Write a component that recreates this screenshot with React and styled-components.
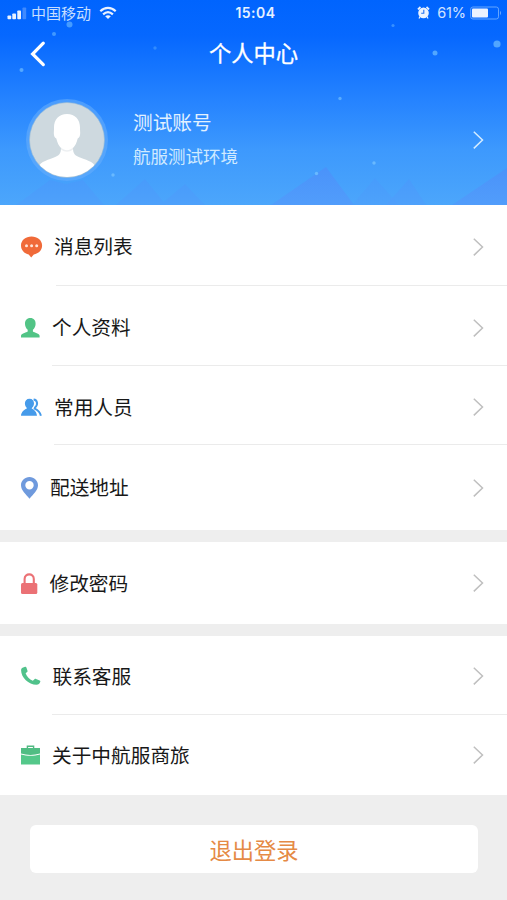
import React from "react";
import styled, { createGlobalStyle } from "styled-components";

const GlobalStyle = createGlobalStyle`
  * { box-sizing: border-box; }
  body {
    margin: 0;
    background: #eeeeee;
    font-family: "Liberation Sans", "Noto Sans CJK SC", sans-serif;
    -webkit-font-smoothing: antialiased;
  }
`;

const Page = styled.div`
  width: 507px;
  height: 900px;
  display: flex;
  flex-direction: column;
  overflow: hidden;
  background: #eeeeee;
`;

const Hero = styled.header`
  position: relative;
  height: 205px;
  flex: none;
  color: #fff;
  background: linear-gradient(180deg, #0064fe 0, #0668ff 36px, #2583ff 100px, #3d99fd 150px, #4ca6fb 205px);
`;

const Scenery = styled.svg`
  position: absolute;
  inset: 0;
`;

const HeroContent = styled.div`
  position: relative;
  display: flex;
  flex-direction: column;
`;

const StatusBar = styled.div`
  display: grid;
  grid-template-columns: 1fr auto 1fr;
  align-items: center;
  height: 26px;
  padding: 0 5px 0 7px;
`;

const StatusGroup = styled.div`
  display: flex;
  align-items: center;
  justify-content: ${(p) => (p.$end ? "flex-end" : "flex-start")};
  opacity: 0.92;
  svg { flex: none; }
`;

const Carrier = styled.span`
  margin: 0 8px 0 4px;
  padding-top: 1px;
  font-size: 15px;
  line-height: 20px;
  color: #d9e9ff;
`;

const Clock = styled.time`
  padding-left: 2px;
  font: 600 14px/20px Inter, "Noto Sans CJK SC", sans-serif;
  letter-spacing: 0.5px;
  color: #e6f1ff;
`;

const Percent = styled.span`
  margin: 0 4px 0 7px;
  font: 400 14.5px/20px Inter, sans-serif;
  letter-spacing: -0.1px;
  color: #e2eeff;
`;

const NavBar = styled.div`
  display: grid;
  grid-template-columns: 60px 1fr 60px;
  align-items: center;
  height: 56px;
`;

const BackButton = styled.button`
  display: flex;
  padding: 0 0 0 29px;
  border: 0;
  background: none;
  color: #fff;
`;

const Title = styled.h1`
  margin: 0;
  padding-top: 2px;
  text-align: center;
  font-size: 22.3px;
  line-height: 32px;
  font-weight: 400;
  -webkit-text-stroke: 0.3px #fff;
`;

const Profile = styled.div`
  display: flex;
  align-items: center;
  height: 116px;
  padding: 0 22px 0 25px;
`;

const Avatar = styled.div`
  display: flex;
  width: 84px;
  height: 84px;
`;

const Identity = styled.div`
  flex: 1;
  margin-left: 24px;
  padding-bottom: 1px;
`;

const Name = styled.div`
  font-size: 19.7px;
  line-height: 34px;
  color: #e2f1ff;
`;

const Company = styled.div`
  font-size: 17.5px;
  line-height: 34px;
  color: #d0eaff;
`;

const Group = styled.section`
  flex: none;
  margin-bottom: 12px;
  background: #fff;
`;

const Row = styled.div`
  display: flex;
  align-items: center;
  height: ${(p) => p.$height}px;
  padding: ${(p) => p.$top || 0}px 22px 0 21px;
`;

const RowIcon = styled.span`
  display: flex;
  width: ${(p) => p.$width}px;
`;

const Label = styled.span`
  flex: 1;
  padding-top: 1px;
  font-size: 19.7px;
  line-height: 30px;
  color: #181818;
`;

const Divider = styled.div`
  height: 1px;
  margin-left: ${(p) => p.$inset}px;
  background: #ebebeb;
`;

const Logout = styled.button`
  flex: none;
  height: 48px;
  margin: 18px 29px 0 30px;
  padding: 0;
  border: 0;
  border-radius: 6px;
  background: #fff;
  color: #e58a45;
  font: 400 22.3px/46px "Noto Sans CJK SC", sans-serif;
`;

const Chevron = ({ color = "#bfbfbf" }) => (
  <svg width="14" height="20" viewBox="0 0 14 20" fill="none">
    <path d="M2.8 1.700 11.500 10l-8.700 8.400" stroke={color} strokeWidth="1.500" />
  </svg>
);

const icons = {
  message: (
    <svg width="22" height="22" viewBox="0 0 22 22">
      <path d="M10.500.5C4.700.5 0 4.300 0 9.500c0 4.600 3.200 8 7.700 8.900l2.500 3.200 2.600-3.200c4.800-.8 8.300-4.200 8.300-8.900C21.100 4.300 16.400.5 10.500.5Z" fill="#f06a39" />
      <g fill="#ffe4d7"><circle cx="5.500" cy="9.800" r="1.500" /><circle cx="10.600" cy="9.800" r="1.500" /><circle cx="15.700" cy="9.800" r="1.500" /></g>
    </svg>
  ),
  person: (
    <svg width="19" height="20" viewBox="0 0 19 20" fill="#52c486">
      <path d="M9.300 0c3.500 0 5.500 2.500 5.300 6-.1 2.500-1.100 4.500-2.700 5.800v1.700c1.500 1.300 6.700 1.700 6.700 4.300v1.700H0v-1.700c0-2.600 5.200-3 6.700-4.300v-1.700C5.100 10.500 4.100 8.500 4 6c-.1-3.500 1.800-6 5.300-6Z" />
    </svg>
  ),
  people: (
    <svg width="22" height="19" viewBox="0 0 22 19">
      <path d="M8.500.8c3 0 4.600 2.100 4.500 4.800-.1 2-1 3.700-2.400 4.700 2.500 1.700 5.200 3.600 5.400 7.500H0c.2-3.900 3.300-6 6.100-7.500C4.800 9.300 4 7.600 3.900 5.600 3.800 2.900 5.500.8 8.500.8Z" fill="#469bea" />
      <path d="M12.600 1.600c3.700.4 4.800 4.800 1.500 7.800l-.4 1.200c3 1.500 5.500 3.500 6.200 7.200" fill="none" stroke="#469bea" strokeWidth="2" />
    </svg>
  ),
  pin: (
    <svg width="18" height="22" viewBox="0 0 18 22" fill="#6f9add">
      <path fillRule="evenodd" d="M8.500 0C3.700 0 0 3.700 0 8.300c0 5.100 4.900 9 8.500 13.400C12.200 17.300 17 13.400 17 8.300 17 3.700 13.300 0 8.500 0Zm0 4.100a4.200 4.200 0 1 1 0 8.400 4.200 4.200 0 0 1 0-8.400Z" />
    </svg>
  ),
  lock: (
    <svg width="17" height="21" viewBox="0 0 17 21">
      <rect y="10" width="16.300" height="11" rx="1.500" fill="#eb7175" />
      <path d="M3.600 11V6c0-6.200 9.200-6.200 9.200 0v5" fill="none" stroke="#eb7175" strokeWidth="2.100" />
    </svg>
  ),
  phone: (
    <svg width="20" height="20" viewBox="0 0 20 20">
      <path d="M1.500 1.800 4.100.7c.7-.2 1 .1 1.300.8l1.100 3.200c.2.600.1 1-.4 1.400L4.600 7.200c1.400 3.400 3.700 5.900 7.200 7.600l1.700-1.600c.5-.4.900-.5 1.500-.3l3.700 1.500c.6.300.8.7.6 1.300-.6 1.900-1.800 3-3.800 3C7.500 18.700.2 11.300.1 4.400c0-1.200.4-2.100 1.400-2.600Z" fill="#50c28b" />
    </svg>
  ),
  briefcase: (
    <svg width="19" height="20" viewBox="0 0 19 20">
      <path d="M6.400 4V1.200h6.200V4" fill="none" stroke="#50b982" strokeWidth="1.400" />
      <path d="M0 3h19v5.600c-6 1.800-13 1.800-19 0Z" fill="#50bd83" />
      <path d="M0 9.400c6 1.800 13 1.800 19 0v10.100H0Z" fill="#54c88a" />
    </svg>
  ),
};

const groups = [
  [
    { icon: "message", label: "消息列表", slot: 33, height: 80, top: 3, inset: 56 },
    { icon: "person", label: "个人资料", slot: 31, height: 79, top: 4, inset: 52 },
    { icon: "people", label: "常用人员", slot: 33, height: 78, top: 4, inset: 54 },
    { icon: "pin", label: "配送地址", slot: 29, height: 85 },
  ],
  [{ icon: "lock", label: "修改密码", slot: 28.5, height: 82 }],
  [
    { icon: "phone", label: "联系客服", slot: 31.5, height: 78, top: 2, inset: 52 },
    { icon: "briefcase", label: "关于中航服商旅", slot: 31, height: 80 },
  ],
];

const Mountains = () => (
  <Scenery width="507" height="205" viewBox="0 0 507 205">
    <defs>
      <linearGradient id="slope" x1="0" y1="166" x2="0" y2="205" gradientUnits="userSpaceOnUse">
        <stop stopColor="#4c90fa" />
        <stop offset="1" stopColor="#539bfb" />
      </linearGradient>
    </defs>
    <g fill="url(#slope)" opacity=".8">
      <path d="M16 205 50 180 66 184 83 180 104 205ZM116 205 145 179 166 205ZM160 205 185 184 205 205Z" opacity=".45" />
      <path d="m271 205 55-38 28 38Z" />
      <path d="m352 205 23-27 24 27Z" opacity=".35" />
      <path d="m386 205 23-26 17 26Z" opacity=".5" />
      <path d="m452 205 55-37v37Z" />
    </g>
    <g fill="#69b9ff">
      <circle cx="69.500" cy="24.500" r="3" opacity=".65" />
      <circle cx="54" cy="34" r="2" opacity=".6" />
      <circle cx="21.500" cy="70" r="2" opacity=".75" />
      <circle cx="155" cy="48" r="1.700" opacity=".4" />
      <circle cx="393" cy="25.500" r="1.600" opacity=".5" />
      <circle cx="435" cy="53" r="2.500" opacity=".75" />
      <circle cx="497" cy="44" r="3.600" opacity=".75" />
      <circle cx="340" cy="98.500" r="1.700" opacity=".75" />
      <circle cx="113" cy="175" r="1.700" />
      <circle cx="316.500" cy="173.500" r="1.700" />
      <circle cx="374" cy="163" r="1.700" />
    </g>
  </Scenery>
);

const Portrait = () => (
  <svg width="84" height="84" viewBox="0 0 84 84">
    <defs><clipPath id="avatar-circle"><circle cx="42" cy="42" r="37" /></clipPath></defs>
    <circle cx="42" cy="42" r="41" fill="#65adfb" opacity=".6" />
    <circle cx="42" cy="42" r="37.500" fill="#ced9df" stroke="#93b9d5" strokeWidth=".6" />
    <g clipPath="url(#avatar-circle)" fill="#fff">
      <path d="M42 16c8.500 0 13.500 6 13 15l.2 4c0 3-1 5-2.500 5.500-1 4.500-2.700 7.500-4.700 9.500 0 6 2 7.500 7 9.500 9 3.300 15 5 17 12V84H12V71.500c2-7 8-8.700 17-12 5-2 7-3.500 7-9.500-2-2-3.700-5-4.700-9.500-1.500-.5-2.500-2.500-2.500-5.500l.2-4c-.5-9 4.500-15 13-15Z" />
    </g>
    <path d="M36 49.500c4 3.500 8 3.500 12 0v2c-4 3-8 3-12 0Z" fill="#edf0f2" />
  </svg>
);

const Signal = () => (
  <svg width="20" height="13" viewBox="0 0 20 13" fill="#fff">
    <rect x=".5" y="8.500" width="3.700" height="3.800" rx=".8" /><rect x="5.300" y="6.500" width="3.700" height="5.800" rx=".8" />
    <rect x="10.300" y="3.500" width="3.700" height="8.800" rx=".8" /><rect x="15.500" y=".5" width="3.700" height="11.800" rx=".8" opacity=".27" />
  </svg>
);

const Wifi = () => (
  <svg width="18" height="14" viewBox="0 0 18 14" fill="none" stroke="#fff" strokeWidth="2.200">
    <path d="M1.300 5.200c4.600-4.400 10.800-4.400 15.400 0M4.100 8.400c3-2.700 6.800-2.700 9.800 0" />
    <path d="m9 13-2.800-2.800c1.800-1.300 3.800-1.300 5.600 0Z" fill="#fff" stroke="none" />
  </svg>
);

const Alarm = () => (
  <svg width="13" height="14" viewBox="0 0 13 14">
    <circle cx="6.500" cy="6.900" r="5.300" fill="#fff" />
    <path d="M.9 3.300 3.500 1M9.500 1l2.600 2.300" stroke="#fff" strokeWidth="1.700" />
    <path d="m3 10.500-1 2M10 10.500l1 2" stroke="#fff" strokeWidth="1.200" />
    <path d="M6.800 3.700v3.600H4.200" fill="none" stroke="#2673ef" strokeWidth="1.100" />
  </svg>
);

const Battery = () => (
  <svg width="32" height="14" viewBox="0 0 32 14">
    <rect x=".7" y="1" width="27.800" height="12" rx="2.200" fill="none" stroke="#6eacff" />
    <rect x="2" y="2.500" width="16" height="9" rx="1" fill="#fff" />
    <path d="M30 5c1.500.8 1.500 3.200 0 4Z" fill="#6eacff" />
  </svg>
);

export default function App() {
  return (
    <Page>
      <GlobalStyle />
      <Hero>
        <Mountains />
        <HeroContent>
          <StatusBar>
            <StatusGroup><Signal /><Carrier>中国移动</Carrier><Wifi /></StatusGroup>
            <Clock>15:04</Clock>
            <StatusGroup $end><Alarm /><Percent>61%</Percent><Battery /></StatusGroup>
          </StatusBar>
          <NavBar>
            <BackButton aria-label="返回">
              <svg width="17" height="28" viewBox="0 0 17 28" fill="none" stroke="currentColor" strokeWidth="3.200" strokeLinecap="round">
                <path d="M14.300 3.200 3.600 14l10.700 10.600" />
              </svg>
            </BackButton>
            <Title>个人中心</Title>
          </NavBar>
          <Profile>
            <Avatar><Portrait /></Avatar>
            <Identity><Name>测试账号</Name><Company>航服测试环境</Company></Identity>
            <Chevron color="#d4ecff" />
          </Profile>
        </HeroContent>
      </Hero>
      {groups.map((rows, index) => (
        <Group key={index}>
          {rows.map((row) => (
            <React.Fragment key={row.label}>
              <Row $height={row.height} $top={row.top}>
                <RowIcon $width={row.slot}>{icons[row.icon]}</RowIcon>
                <Label>{row.label}</Label>
                <Chevron />
              </Row>
              {row.inset && <Divider $inset={row.inset} />}
            </React.Fragment>
          ))}
        </Group>
      ))}
      <Logout>退出登录</Logout>
    </Page>
  );
}
